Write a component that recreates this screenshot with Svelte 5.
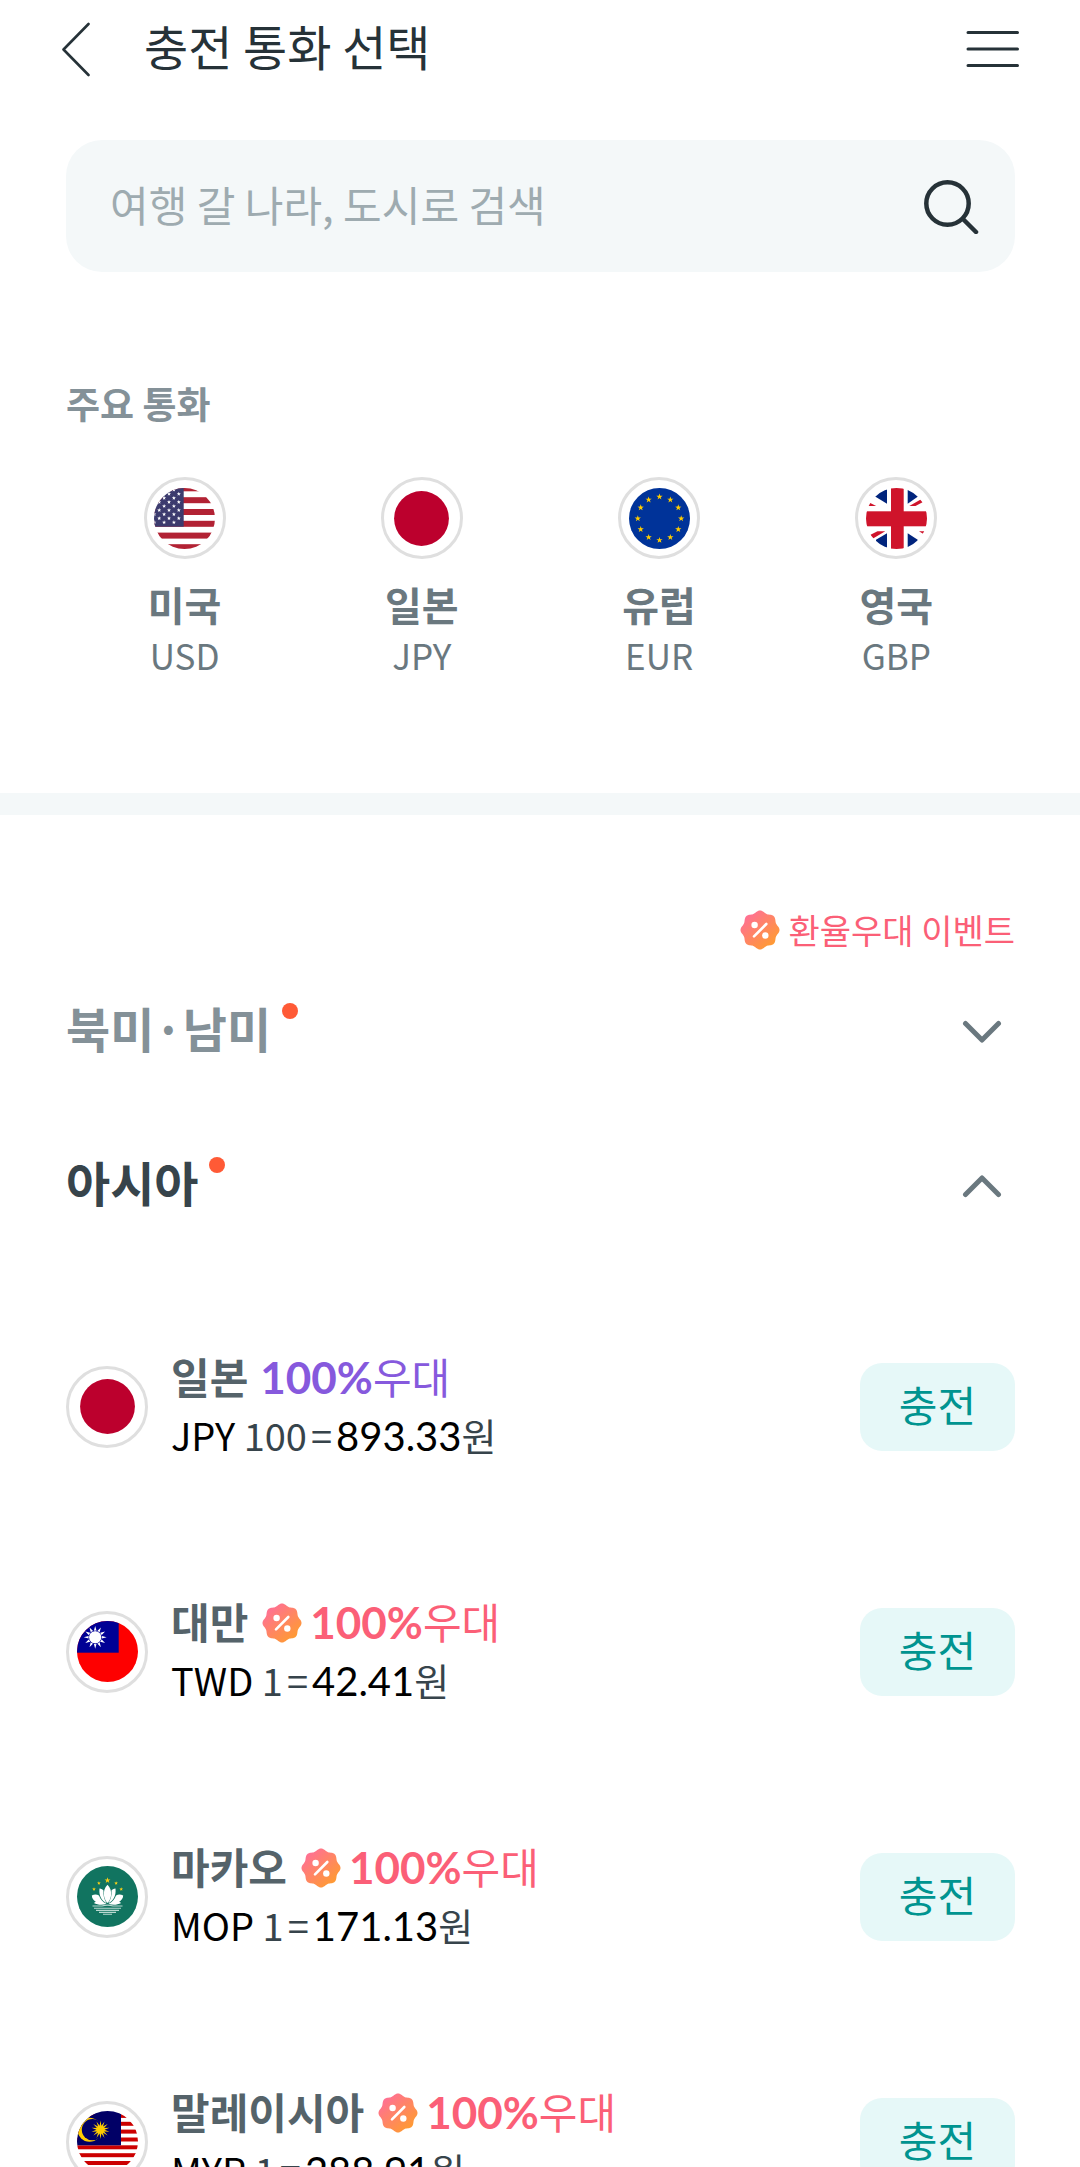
<script>
	let keyword = $state('');
	let opened = $state('asia');

	const majors = [
		{ flag: 'us', name: '미국', code: 'USD' },
		{ flag: 'jp', name: '일본', code: 'JPY' },
		{ flag: 'eu', name: '유럽', code: 'EUR' },
		{ flag: 'gb', name: '영국', code: 'GBP' }
	];

	const regions = [
		{ id: 'america', name: '북미·남미', items: [] },
		{
			id: 'asia',
			name: '아시아',
			items: [
				{ flag: 'jp', name: '일본', code: 'JPY', unit: 100, rate: '893.33', event: false },
				{ flag: 'tw', name: '대만', code: 'TWD', unit: 1, rate: '42.41', event: true },
				{ flag: 'mo', name: '마카오', code: 'MOP', unit: 1, rate: '171.13', event: true },
				{ flag: 'my', name: '말레이시아', code: 'MYR', unit: 1, rate: '288.91', event: true }
			]
		}
	];

	function toggle(id) {
		opened = opened === id ? '' : id;
	}

	// n-pointed star as a polygon points string
	function star(cx, cy, outer, inner, n = 5) {
		const points = [];
		for (let i = 0; i < n * 2; i++) {
			const r = i % 2 ? inner : outer;
			const a = (i * Math.PI) / n - Math.PI / 2;
			points.push((cx + r * Math.cos(a)).toFixed(2) + ',' + (cy + r * Math.sin(a)).toFixed(2));
		}
		return points.join(' ');
	}

	// badge outline with eight soft lobes
	function scallop() {
		const points = [];
		for (let i = 0; i < 120; i++) {
			const a = (i / 120) * 2 * Math.PI;
			const r = 18.4 + 1.1 * Math.cos(8 * a);
			points.push((20 + r * Math.cos(a)).toFixed(2) + ',' + (20 + r * Math.sin(a)).toFixed(2));
		}
		return points.join(' ');
	}

	const badgeShape = scallop();

	const usStars = [];
	for (let row = 0; row < 9; row++) {
		for (let col = 0; col < 3; col++) {
			usStars.push([row % 2 ? 5.2 + col * 9.8 : 0.3 + col * 9.8, 1.9 + row * 4.06]);
		}
	}

	const euStars = [];
	for (let i = 0; i < 12; i++) {
		const a = (i * Math.PI) / 6;
		euStars.push([30.5 + 21.7 * Math.sin(a), 30.5 - 21.7 * Math.cos(a)]);
	}
</script>

{#snippet flagIcon(code)}
	<span class="flag">
		<svg viewBox="0 0 61 61" aria-hidden="true">
			{#if code === 'us'}
				<rect width="61" height="61" fill="#fff" />
				{#each [-2.7, 9.2, 21, 32.8, 44.6, 56.2] as y}
					<rect x="0" {y} width="61" height="6" fill="#b22234" />
				{/each}
				<rect width="29.7" height="38.7" fill="#3c3b6e" />
				{#each usStars as [x, y]}
					<polygon points={star(x, y, 2.1, 0.9)} fill="#fff" />
				{/each}
			{:else if code === 'jp'}
				<circle cx="30.5" cy="30.5" r="27.4" fill="#bc002d" />
			{:else if code === 'eu'}
				<rect width="61" height="61" fill="#003399" />
				{#each euStars as [x, y]}
					<polygon points={star(x, y, 3.3, 1.3)} fill="#ffcc00" />
				{/each}
			{:else if code === 'gb'}
				<rect width="61" height="61" fill="#fff" />
				<g fill="#00247d">
					<polygon points="8.3,8 21,15.8 21,0 8.3,0" />
					<polygon points="52.7,8 41.7,15.8 41.7,0 52.7,0" />
					<polygon points="10,51.7 21,45.3 21,61 10,61" />
					<polygon points="51.7,51.7 41.7,45.3 41.7,61 51.7,61" />
				</g>
				<g fill="#cf142b">
					<polygon points="3.3,14.5 10.2,18 1,18" />
					<polygon points="43.3,18 49.5,18 58,13.6 54.7,11.5" />
					<polygon points="4,47 11.5,43.3 19.3,43.3 7,50.5" />
					<polygon points="53,43.3 59,43.3 57,45.8" />
					<rect x="25" width="12.7" height="61" />
					<rect y="23.3" width="61" height="15" />
				</g>
			{:else if code === 'tw'}
				<rect width="61" height="61" fill="#fe0000" />
				<rect width="41.7" height="31.7" fill="#000095" />
				<polygon points={star(18.2, 16.3, 11.4, 6, 12)} fill="#fff" />
				<circle cx="18.2" cy="16.3" r="6.4" fill="none" stroke="#000095" stroke-width="0.8" />
				<circle cx="18.2" cy="16.3" r="5.8" fill="#fff" />
			{:else if code === 'mo'}
				<rect width="61" height="61" fill="#117460" />
				<g fill="#fbd116">
					<polygon points={star(30.5, 14.4, 3.1, 1.2)} />
					<polygon points={star(21.9, 17.2, 1.9, 0.8)} />
					<polygon points={star(39.1, 17.2, 1.9, 0.8)} />
					<polygon points={star(17, 23.2, 1.9, 0.8)} />
					<polygon points={star(44.2, 23.2, 1.9, 0.8)} />
				</g>
				<g fill="#fff">
					<path d="M30.5 18.8c2.8 3 4 6.5 3.6 10.2-.4 3.4-1.6 6-3.6 8-2-2-3.2-4.6-3.6-8-.4-3.7.8-7.2 3.6-10.2z" />
					<path d="M22.5 22.5c2 .3 3.2 1 4 2-.4 5 .6 9 3.2 12.7-5-2.2-8-7.2-7.2-14.7z" />
					<path d="M38.5 22.5c-2 .3-3.2 1-4 2 .4 5-.6 9-3.2 12.7 5-2.2 8-7.2 7.2-14.7z" />
					<path d="M14.8 29.5c2.5-1.2 5-1.2 7.2 0 1.3 4 4 6.8 7.500 8.300-4 1.500-8.500 1.300-12.700-.8l2-1.200c-2.500-1.500-3.800-3.600-4-6.300z" />
					<path d="M46.2 29.5c-2.500-1.200-5-1.200-7.200 0-1.300 4-4 6.800-7.500 8.300 4 1.500 8.500 1.300 12.700-.8l-2-1.200c2.500-1.500 3.800-3.600 4-6.300z" />
				</g>
				<path
					d="M15.5 40h9.500q5.500-1.800 11 0h9.500M17 42.300h27M19 44.400h23M22 46.400h17M26 48.200h9"
					fill="none"
					stroke="#b9d8d0"
					stroke-width="1.1"
				/>
			{:else if code === 'my'}
				<rect width="61" height="61" fill="#fff" />
				{#each [-5, 2.9, 10.8, 18.6, 26.5, 34.3, 42.2, 50, 57.9] as y}
					<rect x="0" {y} width="61" height="4" fill="#cc0001" />
				{/each}
				<rect width="44" height="34.3" fill="#010066" />
				<circle cx="12.5" cy="18.7" r="12" fill="#ffcc00" />
				<circle cx="15.4" cy="18.7" r="10.6" fill="#010066" />
				<polygon points={star(23.5, 18.7, 9.2, 4, 14)} fill="#ffcc00" />
			{/if}
		</svg>
	</span>
{/snippet}

{#snippet badge()}
	<svg class="badge" viewBox="0 0 40 40" aria-hidden="true">
		<defs>
			<linearGradient id="badge-fill" x1="0.15" y1="0.1" x2="0.85" y2="0.9">
				<stop offset="0" stop-color="#ff6f96" />
				<stop offset="1" stop-color="#ff9c30" />
			</linearGradient>
		</defs>
		<polygon points={badgeShape} fill="url(#badge-fill)" />
		<path d="M26.3 14 14 26.3" stroke="#fff" stroke-width="2.6" stroke-linecap="round" />
		<circle cx="14.6" cy="15" r="3.2" fill="#fff" />
		<circle cx="25.3" cy="25.5" r="3.2" fill="#fff" />
	</svg>
{/snippet}

<div class="page">
	<header class="topbar">
		<button class="icon-btn" aria-label="뒤로">
			<svg width="30" height="56" viewBox="0 0 30 56" fill="none" stroke="#263238" stroke-width="2.6">
				<path d="M28.500 3 3.500 28.500 28.500 54" stroke-linecap="round" stroke-linejoin="round" />
			</svg>
		</button>
		<h1>충전 통화 선택</h1>
		<button class="icon-btn" aria-label="메뉴">
			<svg width="54" height="38" viewBox="0 0 54 38" fill="none" stroke="#263238" stroke-width="3">
				<path d="M2 2.500h49.500M2 19h49.500M2 35.500h49.500" stroke-linecap="round" />
			</svg>
		</button>
	</header>

	<form class="search" onsubmit={(e) => e.preventDefault()}>
		<input type="text" bind:value={keyword} placeholder="여행 갈 나라, 도시로 검색" aria-label="여행 갈 나라, 도시로 검색" />
		<button class="icon-btn" aria-label="검색">
			<svg width="56" height="56" viewBox="0 0 56 56" fill="none" stroke="#263238" stroke-width="4.500">
				<circle cx="24.5" cy="25.5" r="21.2" />
				<path d="M40 41 53 54" stroke-linecap="round" />
			</svg>
		</button>
	</form>

	<section class="major">
		<h2>주요 통화</h2>
		<div class="major-list">
			{#each majors as item}
				<button class="major-item">
					{@render flagIcon(item.flag)}
					<strong>{item.name}</strong>
					<span>{item.code}</span>
				</button>
			{/each}
		</div>
	</section>

	<section class="all">
		<p class="event">{@render badge()}환율우대 이벤트</p>

		{#each regions as region}
			<button class="region" class:open={opened === region.id} aria-expanded={opened === region.id} onclick={() => toggle(region.id)}>
				<span class="region-name">{region.name}</span>
				<i class="dot"></i>
				<svg class="chevron" viewBox="0 0 40 24" fill="none" stroke="#6a787f" stroke-width="5">
					<path d={opened === region.id ? 'M3.5 20.5 20 4 36.5 20.5' : 'M3.5 3.5 20 20 36.5 3.5'} stroke-linecap="round" stroke-linejoin="round" />
				</svg>
			</button>
			{#if opened === region.id}
				<ul class="rates">
					{#each region.items as item}
						<li>
							{@render flagIcon(item.flag)}
							<div class="info">
								<p class="name">
									<strong>{item.name}</strong>
									{#if item.event}{@render badge()}{/if}
									<span class="benefit" class:pink={item.event}><b>100%</b>우대</span>
								</p>
								<p class="rate">
									<em>{item.code}</em> {item.unit}<span class="equals">=</span><em class="amount">{item.rate}</em>원
								</p>
							</div>
							<button class="charge">충전</button>
						</li>
					{/each}
				</ul>
			{/if}
		{/each}
	</section>
</div>

<style>
	:global(body) {
		margin: 0;
		background: #fff;
	}
	.page {
		height: 100vh;
		overflow-y: auto;
		scrollbar-width: none;
		font-family: 'Noto Sans CJK KR', sans-serif;
		color: #263238;
	}
	h1,
	h2,
	p,
	ul {
		margin: 0;
		padding: 0;
	}
	button {
		padding: 0;
		border: 0;
		background: none;
		font-family: inherit;
		color: inherit;
		cursor: pointer;
	}
	svg {
		display: block;
	}
	.topbar {
		display: flex;
		align-items: center;
		height: 98px;
		padding: 0 60px;
	}
	h1 {
		flex: 1;
		margin: 0 0 8px 54px;
		font-size: 48px;
		line-height: 70px;
		font-weight: 400;
	}
	.search {
		display: flex;
		align-items: center;
		height: 132px;
		margin: 42px 65px 0 66px;
		padding: 0 36px 0 44px;
		border-radius: 36px;
		box-sizing: border-box;
		background: #f4f8f9;
	}
	.search input {
		flex: 1;
		min-width: 0;
		margin: 0 0 4px;
		padding: 0;
		border: 0;
		outline: 0;
		background: none;
		font-family: inherit;
		font-size: 42px;
		line-height: 60px;
		color: #263238;
	}
	.search input::placeholder {
		color: #9eabb0;
		opacity: 1;
	}
	.major {
		padding: 103px 65px 115px 66px;
		border-bottom: 22px solid #f4f8f9;
	}
	h2 {
		font-size: 37px;
		line-height: 56px;
		font-weight: 700;
		color: #849198;
	}
	.major-list {
		display: grid;
		grid-template-columns: repeat(4, 1fr);
		margin-top: 46px;
	}
	.major-item {
		display: flex;
		flex-direction: column;
		align-items: center;
		color: #6a787f;
	}
	.major-item strong {
		margin-top: 17px;
		font-size: 40px;
		line-height: 56px;
	}
	.major-item span:last-child {
		font-size: 35px;
		line-height: 46px;
	}
	.flag {
		display: flex;
		align-items: center;
		justify-content: center;
		flex: none;
		width: 82px;
		height: 82px;
		border: 3px solid #dfdfdf;
		border-radius: 50%;
		box-sizing: border-box;
	}
	.flag svg {
		width: 61px;
		height: 61px;
		border-radius: 50%;
	}
	.badge {
		flex: none;
		width: 40px;
		height: 40px;
	}
	.all {
		padding: 90px 65px 0 66px;
	}
	.event {
		display: flex;
		align-items: center;
		justify-content: flex-end;
		gap: 8px;
		font-size: 34px;
		line-height: 50px;
		color: #fb5f77;
	}
	.region {
		display: flex;
		align-items: center;
		width: 100%;
		height: 154px;
		color: #849198;
	}
	.region.open {
		color: #37444b;
	}
	.region-name {
		margin-bottom: 10px;
		font-size: 48px;
		line-height: 70px;
		font-weight: 700;
	}
	.dot {
		align-self: flex-start;
		width: 16px;
		height: 16px;
		margin: 48px 0 0 11px;
		border-radius: 50%;
		background: #ff5a36;
	}
	.chevron {
		width: 40px;
		height: 24px;
		margin: 0 13px 0 auto;
	}
	.rates {
		list-style: none;
		padding-top: 21px;
	}
	.rates li {
		display: flex;
		align-items: center;
		height: 245px;
	}
	.info {
		flex: 1;
		margin: 0 0 4px 23px;
	}
	.name {
		display: flex;
		align-items: center;
		font-size: 42px;
		line-height: 60px;
		color: #55636a;
	}
	.name .badge {
		margin: 4px 0 0 14px;
	}
	.benefit {
		margin-left: 12px;
		color: #8659dd;
	}
	.benefit.pink {
		margin-left: 8px;
		color: #fb5f77;
	}
	.benefit b {
		font-family: Lato, sans-serif;
		font-size: 44px;
	}
	.rate {
		font-size: 38px;
		line-height: 56px;
		color: #37444b;
	}
	.rate em {
		font-style: normal;
		color: #000;
	}
	.rate .amount {
		font-family: Lato, sans-serif;
		font-size: 40px;
	}
	.equals {
		margin: 0 4px;
	}
	.charge {
		width: 155px;
		height: 88px;
		padding-bottom: 6px;
		border-radius: 22px;
		background: #e6f8f8;
		font-size: 42px;
		line-height: 60px;
		color: #009490;
	}
</style>
